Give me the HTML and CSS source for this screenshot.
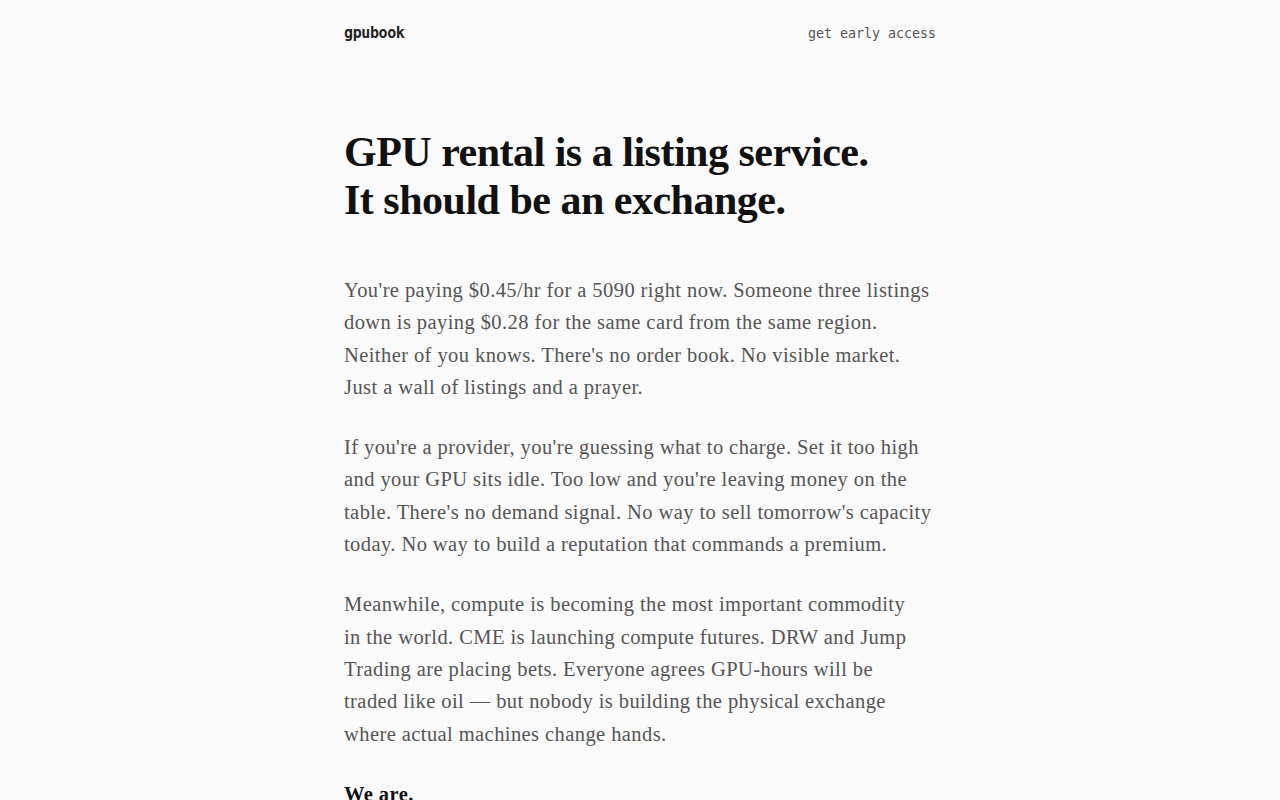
FILE: index.html
```html
<!DOCTYPE html>
<html lang="en">
<head>
<meta charset="utf-8">
<title>gpubook</title>
<link rel="stylesheet" href="styles.css">
</head>
<body>
<div class="page">
  <header class="top">
    <a class="logo" href="#">gpubook</a>
    <a class="cta" href="#">get early access</a>
  </header>
  <main class="content">
    <h1 class="title">GPU rental is a listing service.<br>It should be an exchange.</h1>
    <p class="para">You're paying $0.45/hr for a 5090 right now. Someone three listings down is paying $0.28 for the same card from the same region. Neither of you knows. There's no order book. No visible market. Just a wall of listings and a prayer.</p>
    <p class="para">If you're a provider, you're guessing what to charge. Set it too high and your GPU sits idle. Too low and you're leaving money on the table. There's no demand signal. No way to sell tomorrow's capacity today. No way to build a reputation that commands a premium.</p>
    <p class="para">Meanwhile, compute is becoming the most important commodity<br>in the world. CME is launching compute futures. DRW and Jump<br>Trading are placing bets. Everyone agrees GPU-hours will be<br>traded like oil — but nobody is building the physical exchange<br>where actual machines change hands.</p>
    <p class="para strong">We are.</p>
  </main>
</div>
</body>
</html>
```

FILE: styles.css
```css
html, body {
  margin: 0;
  padding: 0;
  background: #fafafa;
}
body {
  font-family: "Liberation Serif", "DejaVu Serif", serif;
  color: #111;
}
.page {
  max-width: 592px;
  margin: 0 auto;
  padding: 0 24px;
}
.top {
  display: flex;
  justify-content: space-between;
  align-items: center;
  height: 66px;
}
.logo {
  font-family: "DejaVu Sans Mono", "Liberation Mono", monospace;
  font-weight: bold;
  font-size: 15px;
  color: #222;
  text-decoration: none;
  letter-spacing: -0.4px;
}
.cta {
  font-family: "DejaVu Sans Mono", "Liberation Mono", monospace;
  font-size: 13.3px;
  color: #555;
  text-decoration: none;
}
.content {
  padding-top: 62px;
}
.title {
  margin: 0 0 50px;
  font-size: 42px;
  line-height: 48px;
  font-weight: bold;
  letter-spacing: -0.5px;
  color: #111;
}
.para {
  margin: 0 0 28px;
  font-size: 20.5px;
  line-height: 32.3px;
  letter-spacing: 0.42px;
  color: #555;
}
.strong {
  color: #111;
  font-weight: bold;
}
```
